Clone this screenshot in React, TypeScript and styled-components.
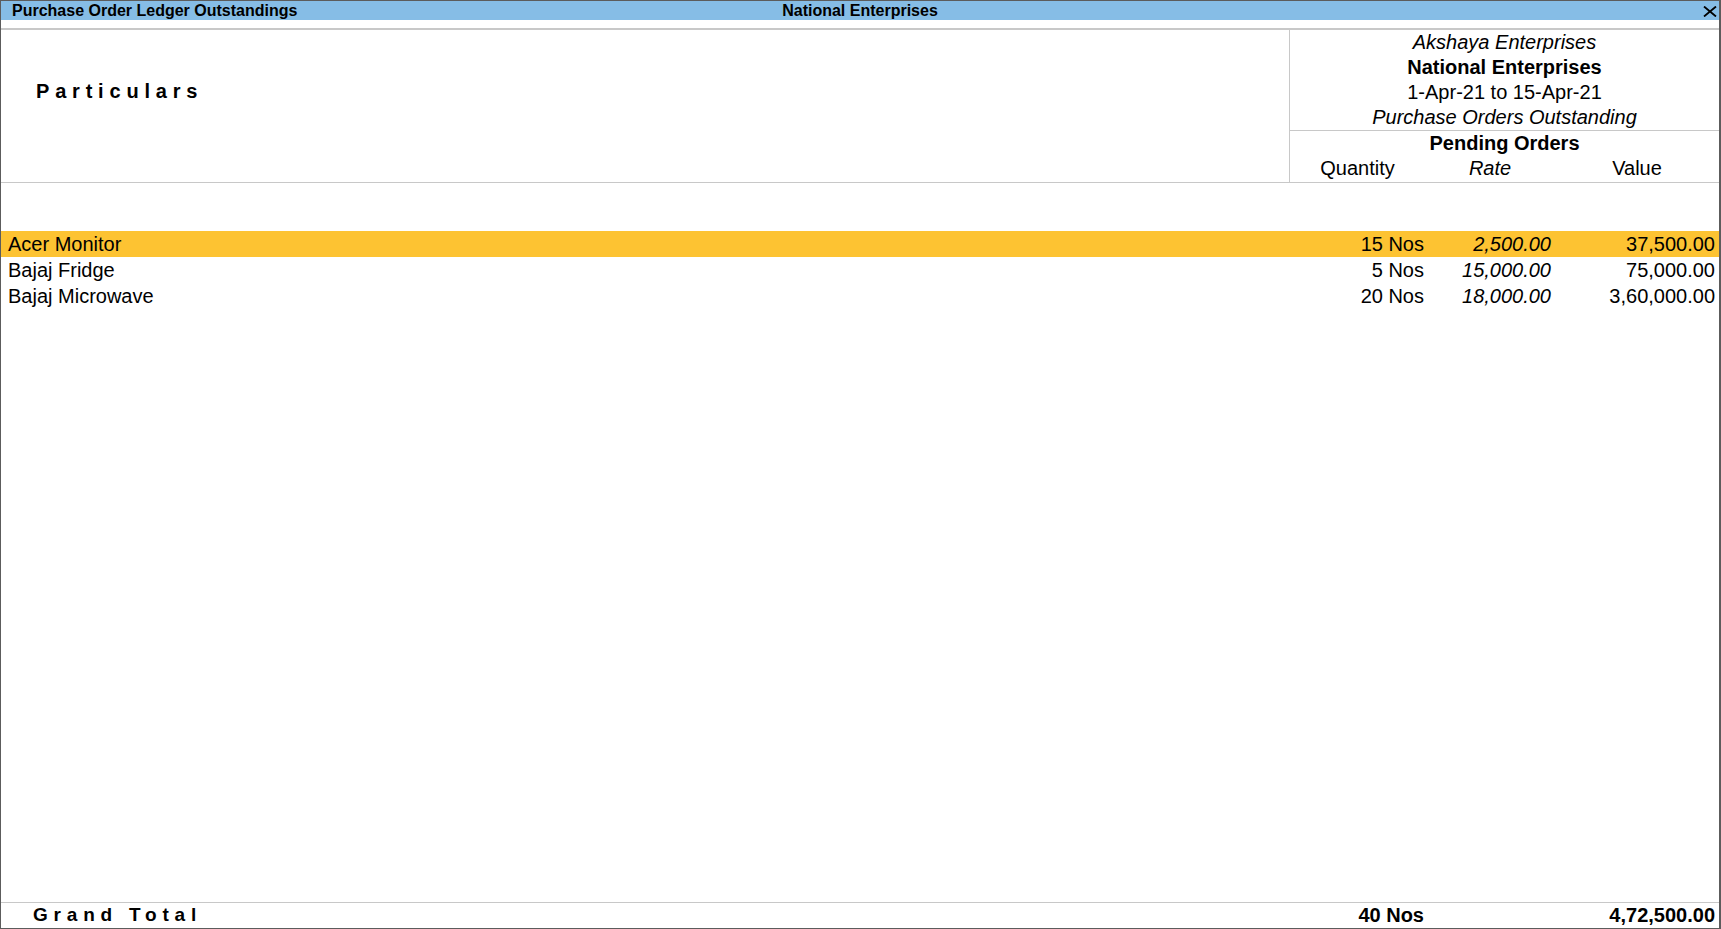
import styled, { createGlobalStyle } from "styled-components";

const GlobalStyle = createGlobalStyle`
    html, body {
        margin: 0;
        padding: 0;
        background: #fff;
    }
    body {
        font-family: "Liberation Sans", Arial, sans-serif;
        color: #000;
    }
`;

const items = [
    { name: "Acer Monitor", qty: "15 Nos", rate: "2,500.00", value: "37,500.00" },
    { name: "Bajaj Fridge", qty: "5 Nos", rate: "15,000.00", value: "75,000.00" },
    { name: "Bajaj Microwave", qty: "20 Nos", rate: "18,000.00", value: "3,60,000.00" },
];

const CloseIcon = () => (
    <svg width="14" height="11" viewBox="0 0 14 11">
        <path d="M1 0.5 L13 10.5 M13 0.5 L1 10.5" stroke="#000" strokeWidth="1.8" fill="none" />
    </svg>
);

const App = () => {
    return (
        <>
            <GlobalStyle />
            <Frame>
                <TitleBar>
                    <span className="left">Purchase Order Ledger Outstandings</span>
                    <span className="center">National Enterprises</span>
                    <span className="right">
                        <CloseIcon />
                    </span>
                </TitleBar>
                <Header>
                    <HeadLeft>Particulars</HeadLeft>
                    <HeadRight>
                        <Period>
                            <HeadLine $italic>Akshaya Enterprises</HeadLine>
                            <HeadLine $bold>National Enterprises</HeadLine>
                            <HeadLine>1-Apr-21 to 15-Apr-21</HeadLine>
                            <HeadLine $italic>Purchase Orders Outstanding</HeadLine>
                        </Period>
                        <HeadLine $bold>Pending Orders</HeadLine>
                        <ColumnLabels>
                            <span>Quantity</span>
                            <span className="italic">Rate</span>
                            <span>Value</span>
                        </ColumnLabels>
                    </HeadRight>
                </Header>
                <Body>
                    {items.map((item, i) => (
                        <Row key={item.name} $selected={i === 0}>
                            <Name>{item.name}</Name>
                            <Cell>{item.qty}</Cell>
                            <Cell $italic $pad={4}>
                                {item.rate}
                            </Cell>
                            <Cell $pad={4}>{item.value}</Cell>
                        </Row>
                    ))}
                </Body>
                <Footer>
                    <TotalLabel>Grand Total</TotalLabel>
                    <Cell $bold>40 Nos</Cell>
                    <Cell $pad={4}></Cell>
                    <Cell $bold $pad={4}>
                        4,72,500.00
                    </Cell>
                </Footer>
            </Frame>
        </>
    );
};

const Frame = styled.div`
    height: 929px;
    box-sizing: border-box;
    border: 1px solid #5c5c5c;
    border-right-width: 2px;
    display: flex;
    flex-direction: column;
    overflow: hidden;
`;

const TitleBar = styled.div`
    height: 19px;
    background: #86bde6;
    display: grid;
    grid-template-columns: 1fr auto 1fr;
    align-items: center;
    font-size: 16px;
    font-weight: 700;
    line-height: 19px;
    margin-bottom: 8px;
    .left {
        padding-left: 11px;
        white-space: nowrap;
    }
    .center {
        white-space: nowrap;
    }
    .right {
        display: flex;
        justify-content: flex-end;
        padding-right: 2px;
        svg {
            display: block;
            margin-top: 1px;
        }
    }
`;

const Header = styled.div`
    display: flex;
    height: 152px;
    border-top: 2px solid #c8c8c8;
    border-bottom: 1px solid #c8c8c8;
    font-size: 20px;
`;

const HeadLeft = styled.div`
    flex: 1;
    padding: 49px 0 0 35px;
    line-height: 25px;
    font-weight: 700;
    letter-spacing: 5.8px;
`;

const HeadRight = styled.div`
    width: 429px;
    border-left: 1px solid #c8c8c8;
    display: flex;
    flex-direction: column;
    text-align: center;
`;

const Period = styled.div`
    border-bottom: 1px solid #c8c8c8;
    height: 100px;
`;

const HeadLine = styled.div<{ $italic?: boolean; $bold?: boolean }>`
    line-height: 25px;
    height: 25px;
    font-style: ${(p) => (p.$italic ? "italic" : "normal")};
    font-weight: ${(p) => (p.$bold ? 700 : 400)};
    white-space: nowrap;
`;

const ColumnLabels = styled.div`
    display: grid;
    grid-template-columns: 135px 130px 164px;
    line-height: 25px;
    .italic {
        font-style: italic;
    }
`;

const Body = styled.div`
    flex: 1;
    padding-top: 48px;
    font-size: 20px;
`;

const Row = styled.div<{ $selected?: boolean }>`
    display: grid;
    grid-template-columns: 1fr 135px 130px 164px;
    height: 26px;
    line-height: 26px;
    background: ${(p) => (p.$selected ? "#fdc332" : "transparent")};
`;

const Name = styled.div`
    padding-left: 7px;
    white-space: nowrap;
`;

const Cell = styled.div<{ $italic?: boolean; $bold?: boolean; $pad?: number }>`
    text-align: right;
    padding-right: ${(p) => p.$pad ?? 1}px;
    font-style: ${(p) => (p.$italic ? "italic" : "normal")};
    font-weight: ${(p) => (p.$bold ? 700 : 400)};
    white-space: nowrap;
`;

const Footer = styled.div`
    display: grid;
    grid-template-columns: 1fr 135px 130px 164px;
    height: 25px;
    line-height: 24px;
    border-top: 1px solid #c8c8c8;
    font-size: 20px;
`;

const TotalLabel = styled.div`
    padding-left: 32px;
    font-weight: 700;
    font-size: 19px;
    letter-spacing: 5.8px;
    white-space: nowrap;
`;

export default App;
